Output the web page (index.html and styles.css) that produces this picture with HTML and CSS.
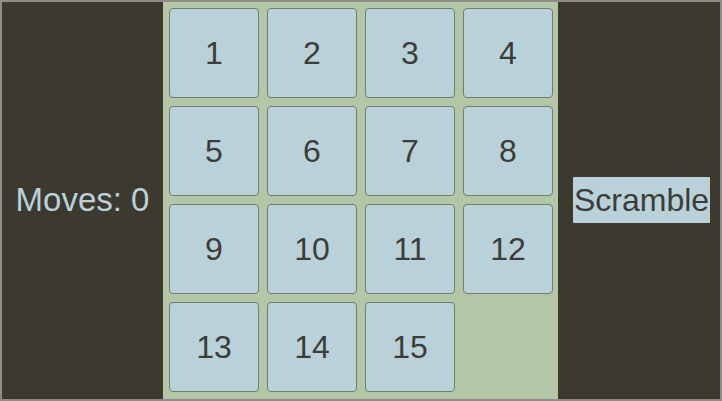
FILE: index.html
```html
<!DOCTYPE html>
<html>
<head>
<meta charset="utf-8">
<link rel="stylesheet" href="styles.css">
</head>
<body>
<div class="app">
  <div class="side left">
    <div class="moves">Moves: 0</div>
  </div>
  <div class="board">
    <div class="tile">1</div>
    <div class="tile">2</div>
    <div class="tile">3</div>
    <div class="tile">4</div>
    <div class="tile">5</div>
    <div class="tile">6</div>
    <div class="tile">7</div>
    <div class="tile">8</div>
    <div class="tile">9</div>
    <div class="tile">10</div>
    <div class="tile">11</div>
    <div class="tile">12</div>
    <div class="tile">13</div>
    <div class="tile">14</div>
    <div class="tile">15</div>
    <div class="empty"></div>
  </div>
  <div class="side right">
    <button class="scramble">Scramble</button>
  </div>
</div>
</body>
</html>
```
FILE: styles.css
```css
html, body {
  margin: 0;
  padding: 0;
  background: #3c3a2e;
}
.app {
  box-sizing: border-box;
  width: 722px;
  height: 401px;
  border: 2px solid #8e8d88;
  background: #3c3a2e;
  display: flex;
  font-family: "Liberation Sans", Arial, sans-serif;
}
.side {
  display: flex;
  align-items: center;
  justify-content: center;
}
.left {
  width: 161px;
  padding-bottom: 1px;
}
.right {
  flex: 1;
  padding-left: 5px;
  padding-bottom: 1px;
}
.moves {
  color: #b9d2da;
  font-size: 33px;
}
.board {
  box-sizing: border-box;
  width: 395px;
  height: 397px;
  padding: 6px 5px 6px 6px;
  background: #b3c6a6;
  display: grid;
  grid-template-columns: repeat(4, 90px);
  grid-template-rows: repeat(4, 90px);
  gap: 8px;
}
.tile {
  box-sizing: border-box;
  background: #b9d2da;
  border: 1px solid #6f7e74;
  border-radius: 4px;
  display: flex;
  align-items: center;
  justify-content: center;
  color: #3d3d38;
  font-size: 32px;
}
.scramble {
  font-family: "Liberation Sans", Arial, sans-serif;
  font-size: 32px;
  color: #3d3d38;
  background: #b9d2da;
  border: none;
  border-radius: 1px;
  height: 46px;
  padding: 0 1px;
  margin: 0;
}
```
